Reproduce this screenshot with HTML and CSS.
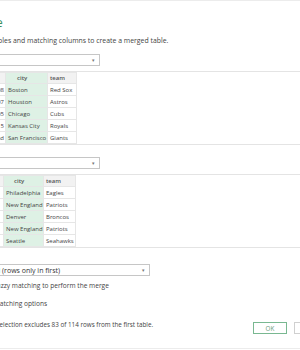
FILE: index.html
```html
<!DOCTYPE html>
<html lang="en">
<head>
  <meta charset="UTF-8">
  <meta name="viewport" content="width=device-width, initial-scale=1.0">
  <title>Merge</title>
  <link rel="stylesheet" href="styles.css">
</head>
<body>
  <div class="dialog">
    <h1 class="title">Merge</h1>
    <p class="hint">Select tables and matching columns to create a merged table.</p>

    <div class="select short"><span>Wins</span><span class="arrow">&#9662;</span></div>
    <div class="preview">
      <div class="grid one">
        <div class="cell head lead"></div><div class="cell head key">city</div><div class="cell head">team</div>
        <div class="cell lead">108</div><div class="cell key">Boston</div><div class="cell">Red Sox</div>
        <div class="cell lead">107</div><div class="cell key">Houston</div><div class="cell">Astros</div>
        <div class="cell lead">105</div><div class="cell key">Chicago</div><div class="cell">Cubs</div>
        <div class="cell lead">115</div><div class="cell key">Kansas City</div><div class="cell">Royals</div>
        <div class="cell lead">nd</div><div class="cell key">San Francisco</div><div class="cell">Giants</div>
      </div>
    </div>

    <div class="select short second"><span>NFL</span><span class="arrow">&#9662;</span></div>
    <div class="preview">
      <div class="grid two">
        <div class="cell head lead"></div><div class="cell head key">city</div><div class="cell head">team</div>
        <div class="cell lead"></div><div class="cell key">Philadelphia</div><div class="cell">Eagles</div>
        <div class="cell lead"></div><div class="cell key">New England</div><div class="cell">Patriots</div>
        <div class="cell lead"></div><div class="cell key">Denver</div><div class="cell">Broncos</div>
        <div class="cell lead"></div><div class="cell key">New England</div><div class="cell">Patriots</div>
        <div class="cell lead"></div><div class="cell key">Seattle</div><div class="cell">Seahawks</div>
      </div>
    </div>

    <div class="select join"><span>Left Anti (rows only in first)</span><span class="arrow">&#9662;</span></div>
    <p class="line fuzzy"><span class="box"></span>Use fuzzy matching to perform the merge</p>
    <p class="line options">Fuzzy matching options</p>

    <div class="footer">
      <p class="status">The selection excludes 83 of 114 rows from the first table.</p>
      <button class="btn ok">OK</button>
      <button class="btn">Cancel</button>
    </div>
  </div>
</body>
</html>
```

FILE: styles.css
```css
body {
  margin: 0;
  overflow: hidden;
  background-color: #fff;
  font-family: "Open Sans", "Noto Sans", sans-serif;
  color: #444;
}
.dialog {
  margin-left: -33px;
  width: 371px;
  height: 347px;
  border-top: 1px solid #ececec;
  border-bottom: 1px solid #ececec;
  font-size: 7px;
}
.title {
  margin: 15px 0 0;
  font-size: 12px;
  line-height: 14px;
  font-weight: normal;
  color: #3b915f;
}
.hint {
  margin: 6px 0 0;
  padding-left: 4px;
  line-height: 10px;
  font-size: 6.9px;
}
.select {
  display: flex;
  justify-content: space-between;
  align-items: center;
  box-sizing: border-box;
  height: 12px;
  margin-top: 8px;
  padding: 0 4px 0 3px;
  border: 1px solid #c6c6c6;
  color: #333;
}
.select.short {
  width: 133px;
}
.select.second {
  margin-top: 12px;
}
.select.join {
  width: 183px;
  margin-top: 16px;
  padding-left: 5px;
}
.arrow {
  font-size: 5px;
  color: #777;
}
.preview {
  margin-top: 5px;
  border-top: 1px solid #e4e4e4;
  border-bottom: 1px solid #e4e4e4;
}
.grid {
  display: grid;
  grid-template-rows: 10px;
  grid-auto-rows: 11px;
  gap: 1px;
  width: max-content;
  border: 1px solid #e6e6e6;
  border-left: none;
  background-color: #e6e6e6;
  font-size: 6px;
}
.one {
  grid-template-columns: 38px 41px 28px;
}
.two {
  grid-template-columns: 36px 39px 31px;
}
.cell {
  display: flex;
  align-items: center;
  padding: 0 2px;
  background-color: #fff;
  white-space: nowrap;
  overflow: hidden;
}
.cell.head {
  background-color: #f2f2f2;
  font-weight: 600;
  color: #555;
}
.cell.key {
  background-color: #def1e5;
}
.cell.head.key {
  padding-left: 11px;
}
.two .cell.head.key {
  padding-left: 10px;
}
.cell.lead {
  justify-content: flex-end;
  padding-right: 1px;
}
.line {
  display: flex;
  align-items: center;
  margin: 5px 0 0;
  line-height: 10px;
  font-size: 6.6px;
}
.box {
  width: 7px;
  height: 7px;
  margin-right: 5px;
  border: 1px solid #999;
}
.options {
  margin-top: 8px;
  padding-left: 8px;
}
.footer {
  display: flex;
  align-items: flex-start;
  gap: 7px;
  margin-top: 11px;
  padding-right: 10px;
}
.status {
  flex: 1;
  margin: 0;
  padding-left: 17px;
  line-height: 10px;
  font-size: 6.3px;
}
.btn {
  width: 34px;
  height: 12px;
  margin-top: 2px;
  padding: 0;
  border: 1px solid #d0d0d0;
  background-color: #fff;
  font-family: inherit;
  font-size: 6.3px;
  color: #555;
}
.btn.ok {
  border-color: #79b891;
  color: #6a9c7c;
}
```
